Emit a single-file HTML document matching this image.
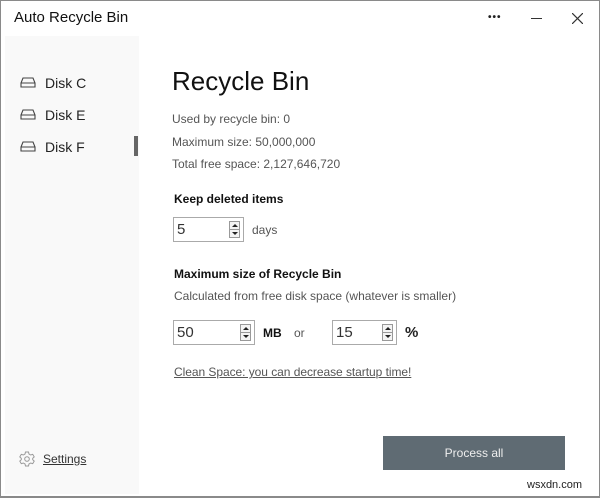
<!DOCTYPE html>
<html><head><style>
*{margin:0;padding:0;box-sizing:border-box}
body{width:600px;height:498px;background:#fff;font-family:"Liberation Sans",sans-serif;position:relative;overflow:hidden;color:#222}
.frame{position:absolute;left:0;top:0;width:600px;height:498px;border:1px solid #8a8a8a;border-bottom:2px solid #8a8a8a}
.side{position:absolute;left:5px;top:36px;width:134px;height:458px;background:#f9f9f9}
.abs{position:absolute;white-space:nowrap}
.disk{font-size:14px;color:#222}
.small{font-size:12px;color:#555}
.b{font-size:12px;font-weight:bold;color:#111}
.spin{position:absolute;border:1px solid #aaa;background:#fff;height:25px;font-size:15px;color:#333;padding:3px 0 0 3px}
.arr{position:absolute;right:3px;top:3px;width:11px;height:17px;border:1px solid #999;background:#f4f4f4}
.arr:before{content:"";position:absolute;left:2px;top:2px;border:3px solid transparent;border-bottom:3px solid #222;border-top:0}
.arr:after{content:"";position:absolute;left:2px;bottom:2px;border:3px solid transparent;border-top:3px solid #222;border-bottom:0}
.arr i{position:absolute;left:0;right:0;top:7px;border-top:1px solid #999}
</style></head><body>
<div class="side"></div>
<div class="abs" style="left:14px;top:9px;font-size:15px;color:#111">Auto Recycle Bin</div>
<div class="abs" style="left:488px;top:12px;font-size:10px;letter-spacing:1px;font-weight:bold">•••</div>
<div class="abs" style="left:531px;top:18px;width:11px;height:1px;background:#333"></div>
<svg class="abs" style="left:572px;top:13px" width="11" height="11"><path d="M0 0L11 11M11 0L0 11" stroke="#333" stroke-width="1.2"/></svg>

<svg class="abs" style="left:20px;top:77px" width="16" height="11"><path d="M3 1H13L15 6V10H1V6Z M1 6H15" fill="none" stroke="#444" stroke-width="1.1"/></svg>
<div class="abs disk" style="left:45px;top:75px">Disk C</div>
<svg class="abs" style="left:20px;top:109px" width="16" height="11"><path d="M3 1H13L15 6V10H1V6Z M1 6H15" fill="none" stroke="#444" stroke-width="1.1"/></svg>
<div class="abs disk" style="left:45px;top:107px">Disk E</div>
<svg class="abs" style="left:20px;top:141px" width="16" height="11"><path d="M3 1H13L15 6V10H1V6Z M1 6H15" fill="none" stroke="#444" stroke-width="1.1"/></svg>
<div class="abs disk" style="left:45px;top:139px">Disk F</div>
<div class="abs" style="left:134px;top:136px;width:4px;height:20px;background:#666"></div>

<div class="abs" style="left:172px;top:66px;font-size:26px;color:#111">Recycle Bin</div>
<div class="abs small" style="left:172px;top:112px">Used by recycle bin: 0</div>
<div class="abs small" style="left:172px;top:135px">Maximum size: 50,000,000</div>
<div class="abs small" style="left:172px;top:157px">Total free space: 2,127,646,720</div>
<div class="abs b" style="left:174px;top:192px">Keep deleted items</div>
<div class="spin" style="left:173px;top:217px;width:71px">5<div class="arr"><i></i></div></div>
<div class="abs small" style="left:252px;top:223px">days</div>
<div class="abs b" style="left:174px;top:267px">Maximum size of Recycle Bin</div>
<div class="abs small" style="left:174px;top:289px">Calculated from free disk space (whatever is smaller)</div>
<div class="spin" style="left:173px;top:320px;width:82px">50<div class="arr"><i></i></div></div>
<div class="abs b" style="left:263px;top:326px">MB</div>
<div class="abs small" style="left:294px;top:326px">or</div>
<div class="spin" style="left:332px;top:320px;width:65px">15<div class="arr"><i></i></div></div>
<div class="abs" style="left:405px;top:324px;font-size:15px;font-weight:bold">%</div>
<div class="abs small" style="left:174px;top:365px;text-decoration:underline;letter-spacing:-0.05px">Clean Space: you can decrease startup time!</div>

<svg class="abs" style="left:19px;top:451px" width="16" height="16" viewBox="0 0 16 16"><path d="M6.5 1h3l.5 2 1.7 1 2-.7 1.5 2.6-1.5 1.4v1.4l1.5 1.4-1.5 2.6-2-.7-1.7 1-.5 2h-3l-.5-2-1.7-1-2 .7L.8 10.1 2.3 8.7V7.3L.8 5.9 2.3 3.3l2 .7L6 3z" fill="none" stroke="#999"/><circle cx="8" cy="8" r="2.3" fill="none" stroke="#999"/></svg>
<div class="abs" style="left:43px;top:452px;font-size:12px;color:#333;text-decoration:underline">Settings</div>

<div class="abs" style="left:383px;top:436px;width:182px;height:34px;background:#5f6b73;color:#eee;font-size:12px;text-align:center;line-height:34px">Process all</div>
<div class="abs" style="left:527px;top:479px;font-size:11px;color:#222">wsxdn.com</div>
<div class="frame"></div>
</body></html>
